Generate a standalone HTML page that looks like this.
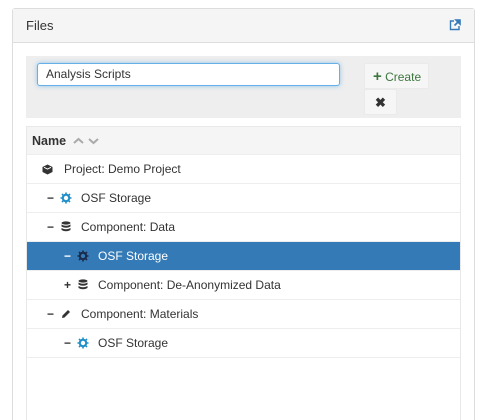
<!DOCTYPE html><html><head><style>
html,body{margin:0;width:483px;height:420px;overflow:hidden}
body{background:#fff;font-family:"Liberation Sans",sans-serif;font-size:12px;color:#333;position:relative}
.panel{position:absolute;left:12px;top:8px;width:461px;height:411px;border:1px solid #ddd;border-bottom:none;border-radius:3px 3px 0 0}
.hd{height:33px;background:#f5f5f5;border-bottom:1px solid #ddd;position:relative}
.hd span{position:absolute;left:13px;top:9px;font-size:13px}
.gray{position:absolute;left:13px;top:47px;width:435px;height:62px;background:#eee}
.inp{position:absolute;left:11px;top:7px;height:21px;background:#fff;border:1px solid #66afe9;border-radius:3px;box-shadow:0 0 5px rgba(102,175,233,.7);font-size:12px;line-height:21px;padding-left:8px;width:293px}
.btn{position:absolute;background:#f6f6f6;border:1px solid #eaeaea;border-radius:2px;box-sizing:border-box}
.tbl{position:absolute;left:13px;top:117px;width:435px;height:294px;border:1px solid #e8e8e8;border-bottom:none;box-sizing:border-box}
.row{height:29px;border-bottom:1px solid #eee;box-sizing:border-box;position:relative;line-height:28px}
.row .t{position:absolute}
.row svg{position:absolute;top:8px}
.sel{background:#337ab7;color:#fff}
</style></head><body>
<svg width="0" height="0" style="position:absolute"><defs>
<g id="gear"><circle cx="6" cy="6" r="3.2" fill="none" stroke-width="2"/><g stroke-width="1.6"><path d="M6 0.5v2M6 9.5v2M0.5 6h2M9.5 6h2M2 2l1.4 1.4M8.6 8.6L10 10M10 2L8.6 3.4M3.4 8.6L2 10"/></g></g>
<g id="db" fill="#333"><ellipse cx="5" cy="2" rx="4.5" ry="1.6"/><path d="M0.5 3.5q4.5 2.5 9 0v2q-4.5 2.5-9 0z"/><path d="M0.5 7q4.5 2.5 9 0v2q-4.5 2.5-9 0z"/></g>
</defs></svg>
<div class="panel">
<div class="hd"><span>Files</span>
<svg style="position:absolute;left:436px;top:10px" width="12" height="12" viewBox="0 0 12 12"><path d="M5 2H1.5v8.5H10V7" fill="none" stroke="#337ab7" stroke-width="1.4"/><path d="M7 1h4v4z M10.5 1.5L5.5 6.5" stroke="#337ab7" stroke-width="1.6" fill="#337ab7"/></svg></div>
<div class="gray">
<div class="inp">Analysis Scripts</div>
<div class="btn" style="left:338px;top:7px;width:65px;height:26px;color:#3c763d;line-height:25px;padding-left:8px"><b style="font-size:15px">+</b> Create</div>
<div class="btn" style="left:338px;top:33px;width:33px;height:26px;text-align:center;line-height:25px;font-weight:bold;font-size:13px">✖</div>
</div>
<div class="tbl">
<div class="row" style="background:#f5f5f5;height:28px"><b class="t" style="left:5px;font-size:12.5px">Name</b>
<svg style="left:46px;top:10px" width="28" height="8" viewBox="0 0 28 8"><path d="M1 6l4.5-4 4.5 4M16 2l4.5 4 4.5-4" fill="none" stroke="#aaa" stroke-width="2"/></svg></div>
<div class="row"><svg style="left:15px;top:9px" width="11" height="11" viewBox="0 0 11 11"><path d="M5.5 0.5L10.5 3v5l-5 2.5-5-2.5V3z" fill="#333"/><path d="M2 3.3l3.5 1.8 3.5-1.8" stroke="#fff" fill="none"/></svg><span class="t" style="left:37px">Project: Demo Project</span></div>
<div class="row"><span class="t" style="left:20px;font-weight:bold">−</span><svg style="left:33px" width="12" height="12" viewBox="0 0 12 12" stroke="#1e8ec9"><use href="#gear"/></svg><span class="t" style="left:54px">OSF Storage</span></div>
<div class="row"><span class="t" style="left:20px;font-weight:bold">−</span><svg style="left:34px" width="10" height="12" viewBox="0 0 10 12"><use href="#db"/></svg><span class="t" style="left:54px">Component: Data</span></div>
<div class="row sel"><span class="t" style="left:37px;font-weight:bold">−</span><svg style="left:50px" width="12" height="12" viewBox="0 0 12 12" stroke="#1a2a4a"><use href="#gear"/></svg><span class="t" style="left:71px">OSF Storage</span></div>
<div class="row"><span class="t" style="left:37px;font-weight:bold">+</span><svg style="left:51px" width="10" height="12" viewBox="0 0 10 12"><use href="#db"/></svg><span class="t" style="left:71px">Component: De-Anonymized Data</span></div>
<div class="row"><span class="t" style="left:20px;font-weight:bold">−</span><svg style="left:34px;top:9px" width="10" height="10" viewBox="0 0 10 10"><path d="M1 9l0.5-2.5L7 1l2 2-5.5 5.5z" fill="#333"/></svg><span class="t" style="left:54px">Component: Materials</span></div>
<div class="row"><span class="t" style="left:37px;font-weight:bold">−</span><svg style="left:50px" width="12" height="12" viewBox="0 0 12 12" stroke="#1e8ec9"><use href="#gear"/></svg><span class="t" style="left:71px">OSF Storage</span></div>
</div>
</div>
</body></html>
